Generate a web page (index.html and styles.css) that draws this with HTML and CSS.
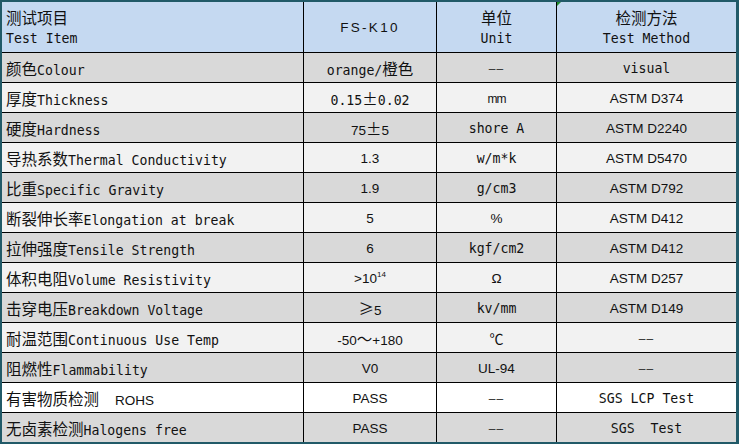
FILE: index.html
```html
<!DOCTYPE html>
<html lang="zh">
<head>
<meta charset="utf-8">
<title>FS-K10</title>
<link rel="stylesheet" href="styles.css">
</head>
<body>
<div class="sheet">
  <div class="c h left"><div class="t"><div><span class="zh">测试项目</span></div><div>Test Item</div></div></div>
  <div class="c h"><div class="t"><span class="sans spaced">FS-K10</span></div></div>
  <div class="c h"><div class="t"><div><span class="zh">单位</span></div><div>Unit</div></div></div>
  <div class="c h flag"><div class="t"><div><span class="zh">检测方法</span></div><div>Test Method</div></div></div>

  <div class="c g left"><div class="t"><span class="zh">颜色</span>Colour</div></div>
  <div class="c g"><div class="t">orange/<span class="zh">橙色</span></div></div>
  <div class="c g"><div class="t"><span class="dash">––</span></div></div>
  <div class="c g"><div class="t">visual</div></div>

  <div class="c l left"><div class="t"><span class="zh">厚度</span>Thickness</div></div>
  <div class="c l"><div class="t">0.15<span class="zh">±</span>0.02</div></div>
  <div class="c l"><div class="t"><span class="sans narrow">mm</span></div></div>
  <div class="c l"><div class="t"><span class="sans">ASTM D374</span></div></div>

  <div class="c g left"><div class="t"><span class="zh">硬度</span>Hardness</div></div>
  <div class="c g"><div class="t"><span class="sans">75</span><span class="zh">±</span><span class="sans">5</span></div></div>
  <div class="c g"><div class="t">shore A</div></div>
  <div class="c g"><div class="t"><span class="sans">ASTM D2240</span></div></div>

  <div class="c l left"><div class="t"><span class="zh">导热系数</span>Thermal Conductivity</div></div>
  <div class="c l"><div class="t"><span class="sans">1.3</span></div></div>
  <div class="c l"><div class="t">w/m*k</div></div>
  <div class="c l"><div class="t"><span class="sans">ASTM D5470</span></div></div>

  <div class="c g left"><div class="t"><span class="zh">比重</span>Specific Gravity</div></div>
  <div class="c g"><div class="t"><span class="sans">1.9</span></div></div>
  <div class="c g"><div class="t">g/cm3</div></div>
  <div class="c g"><div class="t"><span class="sans">ASTM D792</span></div></div>

  <div class="c l left"><div class="t"><span class="zh">断裂伸长率</span>Elongation at break</div></div>
  <div class="c l"><div class="t"><span class="sans">5</span></div></div>
  <div class="c l"><div class="t"><span class="sans">%</span></div></div>
  <div class="c l"><div class="t"><span class="sans">ASTM D412</span></div></div>

  <div class="c g left"><div class="t"><span class="zh">拉伸强度</span>Tensile Strength</div></div>
  <div class="c g"><div class="t"><span class="sans">6</span></div></div>
  <div class="c g"><div class="t">kgf/cm2</div></div>
  <div class="c g"><div class="t"><span class="sans">ASTM D412</span></div></div>

  <div class="c l left"><div class="t"><span class="zh">体积电阻</span>Volume Resistivity</div></div>
  <div class="c l"><div class="t"><span class="sans">&gt;10<sup class="sup">14</sup></span></div></div>
  <div class="c l"><div class="t"><span class="sans">Ω</span></div></div>
  <div class="c l"><div class="t"><span class="sans">ASTM D257</span></div></div>

  <div class="c g left"><div class="t"><span class="zh">击穿电压</span>Breakdown Voltage</div></div>
  <div class="c g"><div class="t"><span class="zh">≥</span><span class="sans">5</span></div></div>
  <div class="c g"><div class="t">kv/mm</div></div>
  <div class="c g"><div class="t"><span class="sans">ASTM D149</span></div></div>

  <div class="c l left"><div class="t"><span class="zh">耐温范围</span>Continuous Use Temp</div></div>
  <div class="c l"><div class="t"><span class="sans">-50</span><span class="zh">～</span><span class="sans">+180</span></div></div>
  <div class="c l"><div class="t"><span class="zh deg">℃</span></div></div>
  <div class="c l"><div class="t"><span class="dash">––</span></div></div>

  <div class="c g left"><div class="t"><span class="zh">阻燃性</span>Flammability</div></div>
  <div class="c g"><div class="t"><span class="sans">V0</span></div></div>
  <div class="c g"><div class="t"><span class="sans">UL-94</span></div></div>
  <div class="c g"><div class="t"><span class="dash">––</span></div></div>

  <div class="c w left"><div class="t"><span class="zh">有害物质检测</span>&nbsp; <span class="sans">ROHS</span></div></div>
  <div class="c w"><div class="t"><span class="sans">PASS</span></div></div>
  <div class="c w"><div class="t"><span class="dash">––</span></div></div>
  <div class="c w"><div class="t">SGS LCP Test</div></div>

  <div class="c g left"><div class="t"><span class="zh">无卤素检测</span>Halogens free</div></div>
  <div class="c g"><div class="t"><span class="sans">PASS</span></div></div>
  <div class="c g"><div class="t"><span class="dash">––</span></div></div>
  <div class="c g"><div class="t">SGS&nbsp; Test</div></div>
</div>
</body>
</html>
```
FILE: styles.css
```css
html, body {
  margin: 0;
  padding: 0;
  background: #ffffff;
}

.sheet {
  box-sizing: border-box;
  width: 739px;
  height: 444px;
  border-style: solid;
  border-color: #215a68;
  border-width: 2px 3px 2px 2px;
  display: grid;
  grid-template-columns: 301px 132px 119px 1fr;
  grid-template-rows: 50px repeat(13, 29px);
  gap: 1px;
  background: #000000;
  font-family: "DejaVu Sans Mono", "Noto Sans CJK SC", monospace;
  font-size: 13.2px;
  color: #111111;
}

.c {
  display: flex;
  align-items: center;
  justify-content: center;
  padding-top: 3px;
  box-sizing: border-box;
  white-space: nowrap;
  line-height: 18px;
}

.t {
  text-align: center;
}

.c.left {
  justify-content: flex-start;
  padding-left: 4px;
}

.c.left .t {
  text-align: left;
}

.h {
  background: #c5d9f1;
  padding-top: 1px;
  line-height: 19px;
}

.g { background: #d9d9d9; }
.l { background: #f2f2f2; }
.w { background: #ffffff; }

.zh {
  font-family: "Noto Sans CJK SC", sans-serif;
  font-size: 15.5px;
}

.deg {
  font-size: 14px;
}

.sans {
  font-family: "Liberation Sans", Arial, sans-serif;
  font-size: 13.5px;
}

.spaced {
  letter-spacing: 2.3px;
  font-size: 13.5px;
}

.narrow {
  letter-spacing: -1px;
  font-size: 12px;
}

.dash {
  font-family: "Liberation Sans", Arial, sans-serif;
  font-size: 12px;
  letter-spacing: 1px;
  color: #333333;
}

.sup {
  font-size: 8px;
  vertical-align: 6px;
  line-height: 0;
}

.flag {
  position: relative;
}

.flag::before {
  content: "";
  position: absolute;
  left: 0;
  top: 0;
  border-style: solid;
  border-width: 4px 4px 0 0;
  border-color: #1e8c2c transparent transparent transparent;
}
```
